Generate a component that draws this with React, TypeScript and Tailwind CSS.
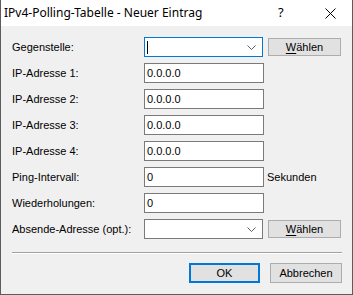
import React from 'react';

const label = "w-[132px] shrink-0 text-[11px] leading-none text-black";
const field = "w-[120px] h-[20px] bg-white border border-[#7a7a7a] flex items-center pl-[2px] text-[11px] text-black";
const btn = "h-[18px] w-[73px] bg-[#e1e1e1] border border-[#adadad] flex items-center justify-center text-[11px] text-black";

function Chevron() {
  return (
    <svg width="9" height="5" viewBox="0 0 9 5" className="ml-auto mr-[6px]">
      <path d="M0.5 0.5 L4.5 4.5 L8.5 0.5" fill="none" stroke="#606060" strokeWidth="1" />
    </svg>
  );
}

function Waehlen() {
  return (
    <div className={btn}>
      <span><span className="underline underline-offset-2">W</span>ählen</span>
    </div>
  );
}

function Row({ text, children }: { text: string; children: React.ReactNode }) {
  return (
    <div className="flex items-center h-[20px]">
      <div className={label}>{text}</div>
      {children}
    </div>
  );
}

export default function App() {
  return (
    <div className="w-[353px] h-[295px] bg-[#f0f0f0] border-x border-b border-[#5c5c5c] flex flex-col" style={{ fontFamily: '"Liberation Sans", Arial, sans-serif' }}>
      {/* title bar */}
      <div className="h-[26px] bg-white flex items-center shrink-0">
        <div className="pl-[3px] text-[12px] text-black" style={{ fontFamily: '"Noto Sans", "Open Sans", sans-serif' }}>IPv4-Polling-Tabelle - Neuer Eintrag</div>
        <div className="ml-auto w-[10px] text-[13px] text-black mr-[37px]" style={{ fontFamily: '"Noto Sans", sans-serif' }}>?</div>
        <svg width="11" height="11" viewBox="0 0 11 11" className="mr-[16px]">
          <path d="M0.5 0.5 L10.5 10.5 M10.5 0.5 L0.5 10.5" stroke="#000" strokeWidth="1" />
        </svg>
      </div>

      <div className="flex flex-col gap-[6px] pl-[11px] pt-[11px]">
        <Row text="Gegenstelle:">
          <div className="w-[119px] h-[20px] bg-white border border-[#0078d7] flex items-center">
            <div className="ml-[2px] w-[1px] h-[13px] bg-black" />
            <Chevron />
          </div>
          <div className="ml-[5px]"><Waehlen /></div>
        </Row>
        <Row text="IP-Adresse 1:"><div className={field}>0.0.0.0</div></Row>
        <Row text="IP-Adresse 2:"><div className={field}>0.0.0.0</div></Row>
        <Row text="IP-Adresse 3:"><div className={field}>0.0.0.0</div></Row>
        <Row text="IP-Adresse 4:"><div className={field}>0.0.0.0</div></Row>
        <Row text="Ping-Intervall:">
          <div className={field}>0</div>
          <div className="ml-[3px] text-[11px] text-black">Sekunden</div>
        </Row>
        <Row text="Wiederholungen:"><div className={field}>0</div></Row>
        <Row text="Absende-Adresse (opt.):">
          <div className="w-[119px] h-[20px] bg-white border border-[#7a7a7a] flex items-center">
            <Chevron />
          </div>
          <div className="ml-[5px]"><Waehlen /></div>
        </Row>
      </div>

      <div className="mx-[11px] mr-[10px] mt-[13px] h-[2px] border-t border-[#a0a0a0] border-b border-b-white" />

      <div className="flex justify-end gap-[10px] pr-[10px] mt-[9px]">
        <div className="h-[20px] w-[71px] bg-[#e1e1e1] border-2 border-[#0078d7] flex items-center justify-center text-[11px] text-black">OK</div>
        <div className="h-[20px] w-[72px] bg-[#e1e1e1] border border-[#adadad] flex items-center justify-center text-[11px] text-black">Abbrechen</div>
      </div>
    </div>
  );
}
